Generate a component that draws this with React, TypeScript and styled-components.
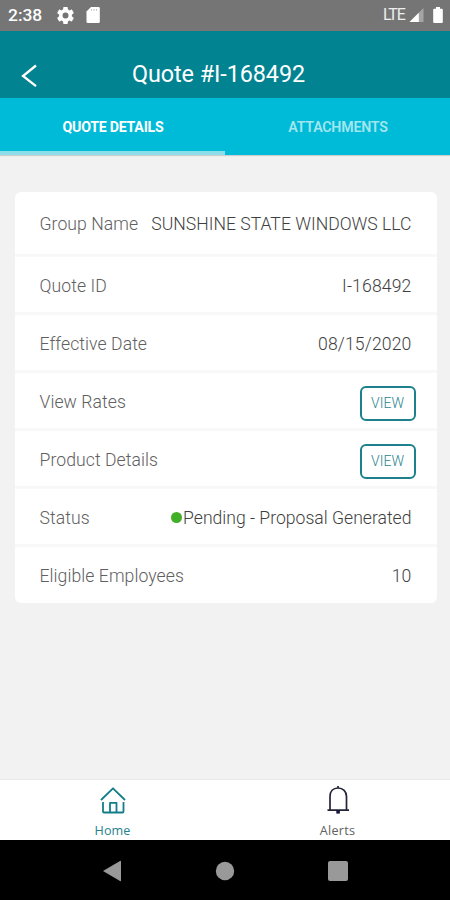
import React from "react";
import styled, { createGlobalStyle } from "styled-components";

const GlobalStyle = createGlobalStyle`
  * { box-sizing: border-box; }
  body { margin: 0; background: #f2f2f2; font-family: Roboto, "Liberation Sans", sans-serif; }
`;

const Screen = styled.div`
  width: 450px;
  height: 900px;
  display: flex;
  flex-direction: column;
  background: #f2f2f2;
  overflow: hidden;
`;

const StatusBar = styled.div`
  height: 30.5px;
  flex: none;
  display: flex;
  align-items: center;
  padding: 0 7px 0 8px;
  background: #757575;
  color: #fff;
`;

const Clock = styled.span`
  width: 49px;
  font-size: 17.4px;
  font-weight: 500;
  line-height: 20px;
`;

const StatusIcons = styled.div`
  display: flex;
  align-items: center;
  gap: 12px;
`;

const Signals = styled.div`
  margin-left: auto;
  display: flex;
  align-items: center;
`;

const Network = styled.span`
  width: 26px;
  font-size: 16px;
  letter-spacing: -1.1px;
  line-height: 20px;
  color: #eee;
`;

const Header = styled.header`
  height: 67px;
  flex: none;
  display: grid;
  grid-template-columns: 100px 1fr 113px;
  padding-top: 19.5px;
  background: #028391;
  color: #fff;
`;

const BackButton = styled.button`
  height: 47px;
  display: flex;
  align-items: center;
  padding: 4px 0 0 20px;
  border: 0;
  background: none;
`;

const Title = styled.h1`
  height: 47px;
  margin: 0;
  text-align: center;
  font-size: 23.4px;
  font-weight: 400;
  letter-spacing: -0.08px;
  line-height: 49px;
  white-space: nowrap;
`;

const Tabs = styled.nav`
  height: 57.5px;
  flex: none;
  display: grid;
  grid-template-columns: 1fr 1fr;
  background: #00bbd7;
  box-shadow: 0 1px 1px rgba(0, 0, 0, 0.14);
`;

const Tab = styled.button<{ $active?: boolean }>`
  padding: 6px 0 0 1px;
  border: 0;
  border-bottom: 4px solid ${(p) => (p.$active ? "#8cdfe9" : "transparent")};
  background: none;
  color: ${(p) => (p.$active ? "#fff" : "#a3e6f0")};
  font: ${(p) => (p.$active ? 700 : 600)} 14.2px/20px Roboto, sans-serif;
  letter-spacing: ${(p) => (p.$active ? "-0.26px" : "-0.2px")};
`;

const Content = styled.main`
  flex: 1;
  padding: 37px 13.5px 0 14.5px;
`;

const Card = styled.dl`
  margin: 0;
  border-radius: 6px;
  overflow: hidden;
  background: #fff;
`;

const Row = styled.div<{ $tall?: boolean }>`
  height: ${(p) => (p.$tall ? "65px" : "58px")};
  display: flex;
  align-items: center;
  justify-content: space-between;
  padding: 2px 25px 0;
  border-bottom: 3px solid #f8f8f8;
  &:last-child { border-bottom: 0; height: 56px; }
`;

const Label = styled.dt`
  color: #606060;
  font-size: 17.6px;
  font-weight: 300;
  letter-spacing: 0.07px;
  line-height: 24px;
  white-space: nowrap;
`;

const Value = styled.dd<{ $numeric?: boolean }>`
  margin: 0;
  display: flex;
  align-items: center;
  color: #3f3f3f;
  font-size: 17.6px;
  font-weight: 300;
  letter-spacing: ${(p) => (p.$numeric ? "0.14px" : "0")};
  line-height: 24px;
  white-space: nowrap;
`;

const StatusDot = styled.span`
  width: 11px;
  height: 11px;
  margin-right: 1.5px;
  border-radius: 50%;
  background: #43ae27;
`;

const ViewButton = styled.button`
  width: 56px;
  height: 35px;
  margin: 4px -4px 0 0;
  padding: 0 0 2px;
  border: 2px solid #1c818c;
  border-radius: 6px;
  background: #fff;
  color: #2b8590;
  font: 300 14px/20px Roboto, sans-serif;
`;

const BottomNav = styled.nav`
  height: 61px;
  flex: none;
  display: grid;
  grid-template-columns: 1fr 1fr;
  border-top: 1px solid #e9e9e9;
  background: #fff;
`;

const NavItem = styled.button<{ $active?: boolean }>`
  display: flex;
  flex-direction: column;
  align-items: center;
  gap: 8px;
  padding: 6px 0 0;
  border: 0;
  background: none;
  color: ${(p) => (p.$active ? "#28808c" : "#606060")};
  font: 400 12.6px/18px "Open Sans", sans-serif;
  letter-spacing: ${(p) => (p.$active ? "0.1px" : "0.3px")};
`;

const SystemBar = styled.footer`
  height: 60px;
  flex: none;
  display: grid;
  grid-template-columns: repeat(3, 113px);
  justify-content: center;
  justify-items: center;
  align-items: center;
  padding-top: 1px;
  background: #000;
`;

const GearIcon = () => (
  <svg width="17" height="17" viewBox="2 2 20 20" fill="#fff">
    <path d="M19.43 12.98c.04-.32.07-.64.07-.98s-.03-.66-.07-.98l2.11-1.65c.19-.15.24-.42.12-.64l-2-3.46c-.12-.22-.39-.3-.61-.22l-2.49 1c-.52-.4-1.08-.73-1.69-.98l-.38-2.65C14.46 2.18 14.25 2 14 2h-4c-.25 0-.46.18-.49.42l-.38 2.65c-.61.25-1.17.59-1.69.98l-2.49-1c-.23-.09-.49 0-.61.22l-2 3.46c-.13.22-.07.49.12.64l2.11 1.65c-.04.32-.07.65-.07.98s.03.66.07.98l-2.11 1.65c-.19.15-.24.42-.12.64l2 3.46c.12.22.39.3.61.22l2.49-1c.52.4 1.08.73 1.69.98l.38 2.65c.03.24.24.42.49.42h4c.25 0 .46-.18.49-.42l.38-2.65c.61-.25 1.17-.59 1.69-.98l2.49 1c.23.09.49 0 .61-.22l2-3.46c.12-.22.07-.49-.12-.64zM12 15.5a3.5 3.5 0 1 1 0-7 3.5 3.5 0 0 1 0 7z" />
  </svg>
);

const SdCardIcon = () => (
  <svg width="15" height="18" viewBox="0 0 15 18">
    <path d="M5 1h7.500a1.300 1.300 0 0 1 1.300 1.300v13.400a1.300 1.300 0 0 1-1.300 1.300H1.800A1.300 1.300 0 0 1 .5 15.700V5.500z" fill="#fff" />
    <path d="M5.500 3v1.600M8 3v1.600M10.500 3v1.600" stroke="#bbb" strokeWidth="1" />
  </svg>
);

const SignalIcon = () => (
  <svg width="16" height="16" viewBox="0 0 16 16">
    <path d="M14.500 1v14H.5z" fill="#a5a5a5" />
    <path d="M9.800 5.700V15H.5z" fill="#fff" />
  </svg>
);

const BatteryIcon = () => (
  <svg width="10" height="18" viewBox="0 0 10 18">
    <path d="M3 1h4v1.800h1.800q1 0 1 1v12.200q0 1-1 1H1.200q-1 0-1-1V3.800q0-1 1-1H3z" fill="#fff" />
  </svg>
);

const BatterySlot = styled.span`
  display: flex;
  margin-left: 8px;
`;

const BackIcon = () => (
  <svg width="18" height="24" viewBox="0 0 18 24" fill="none" stroke="#fff" strokeWidth="2.300">
    <path d="M16 1.500 3 12l13 10.200" />
  </svg>
);

const HomeIcon = () => (
  <svg width="28" height="28" viewBox="0 0 28 28" fill="none" stroke="#137d89" strokeWidth="1.800" strokeLinejoin="round">
    <path d="M2 14 14 2.300 26 14M4 16v9.500q0 1 1 1h18.500q1 0 1-1V16M11 26v-9.200h6.500V26" />
  </svg>
);

const BellIcon = () => (
  <svg width="28" height="30" viewBox="0 0 28 30" fill="none" stroke="#242638" strokeWidth="1.700">
    <path d="M6 25V11.500C6 6.500 9 3 14 3s8.500 3.500 8.500 8.500V25M3.500 25.200h21.500M14 3V1" />
    <path d="M12.300 25h3.600v3.600h-3.600z" fill="#16183a" stroke="none" />
  </svg>
);

const BellSlot = styled.span`
  display: flex;
  height: 28px;
  margin-top: -1px;
  margin-bottom: 1px;
`;

const TriangleIcon = () => (
  <svg width="20" height="22" viewBox="0 0 20 22" fill="#999">
    <path d="M1 11 18 1q1-.5 1 .5v19q0 1-1 .5z" />
  </svg>
);

const CircleIcon = () => (
  <svg width="20" height="20" viewBox="0 0 20 20"><circle cx="10" cy="10" r="9.200" fill="#999" /></svg>
);

const SquareIcon = () => (
  <svg width="20" height="20" viewBox="0 0 20 20"><rect width="20" height="20" rx="2" fill="#999" /></svg>
);

export default function App() {
  return (
    <Screen>
      <GlobalStyle />
      <StatusBar>
        <Clock>2:38</Clock>
        <StatusIcons><GearIcon /><SdCardIcon /></StatusIcons>
        <Signals>
          <Network>LTE</Network>
          <SignalIcon />
          <BatterySlot><BatteryIcon /></BatterySlot>
        </Signals>
      </StatusBar>
      <Header>
        <BackButton aria-label="Back"><BackIcon /></BackButton>
        <Title>Quote #I-168492</Title>
      </Header>
      <Tabs>
        <Tab $active>QUOTE DETAILS</Tab>
        <Tab>ATTACHMENTS</Tab>
      </Tabs>
      <Content>
        <Card>
          <Row $tall><Label>Group Name</Label><Value>SUNSHINE STATE WINDOWS LLC</Value></Row>
          <Row><Label>Quote ID</Label><Value $numeric>I-168492</Value></Row>
          <Row><Label>Effective Date</Label><Value $numeric>08/15/2020</Value></Row>
          <Row><Label>View Rates</Label><ViewButton>VIEW</ViewButton></Row>
          <Row><Label>Product Details</Label><ViewButton>VIEW</ViewButton></Row>
          <Row><Label>Status</Label><Value><StatusDot />Pending - Proposal Generated</Value></Row>
          <Row><Label>Eligible Employees</Label><Value $numeric>10</Value></Row>
        </Card>
      </Content>
      <BottomNav>
        <NavItem $active><HomeIcon />Home</NavItem>
        <NavItem><BellSlot><BellIcon /></BellSlot>Alerts</NavItem>
      </BottomNav>
      <SystemBar><TriangleIcon /><CircleIcon /><SquareIcon /></SystemBar>
    </Screen>
  );
}
